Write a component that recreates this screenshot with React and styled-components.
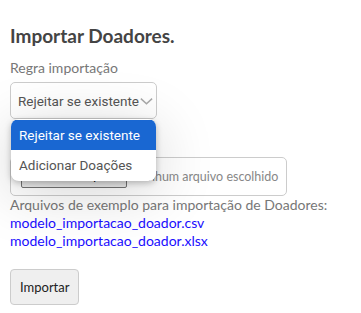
import React from "react";
import styled, { createGlobalStyle } from "styled-components";

const Global = createGlobalStyle`
  html, body { margin: 0; padding: 0; background: #fff; }
  body { font-family: Lato, "Open Sans", sans-serif; }
`;

const Page = styled.div`
  padding: 24px 10px 10px 10px;
  display: flex;
  flex-direction: column;
  align-items: flex-start;
  white-space: nowrap;
`;

const Title = styled.h2`
  margin: 0 0 10px 0;
  font-size: 19px;
  font-weight: 700;
  color: #444;
  line-height: 24px;
`;

const Label = styled.label`
  font-size: 14px;
  color: #777;
  line-height: 20px;
  margin-bottom: 4px;
`;

const SelectWrap = styled.div`
  position: relative;
`;

const SelectBox = styled.div`
  box-sizing: border-box;
  width: 147px;
  height: 37px;
  border: 1px solid #ccc;
  border-radius: 5px;
  display: flex;
  align-items: center;
  justify-content: space-between;
  padding: 0 2px 0 7px;
  font-family: Roboto, "Liberation Sans", sans-serif;
  font-size: 13.5px;
  color: #555;
  overflow: hidden;
`;

const Menu = styled.ul`
  position: absolute;
  left: 1px;
  top: 37px;
  width: 145px;
  margin: 0;
  padding: 1px 0;
  list-style: none;
  background: #fff;
  border-radius: 8px;
  overflow: hidden;
  box-shadow: 0 2px 6px rgba(0, 0, 0, 0.25), 0 10px 60px rgba(0, 0, 0, 0.18);
  z-index: 2;
`;

const Option = styled.li`
  height: 30px;
  display: flex;
  align-items: center;
  padding-left: 8px;
  font-family: Roboto, "Liberation Sans", sans-serif;
  font-size: 13.5px;
  color: ${(p) => (p.$active ? "#fff" : "#555")};
  background: ${(p) => (p.$active ? "#1967d2" : "#fff")};
`;

const FileBox = styled.div`
  box-sizing: border-box;
  margin-top: 38px;
  width: 277px;
  height: 39px;
  border: 1px solid #ccc;
  border-radius: 5px;
  display: flex;
  align-items: center;
  gap: 5px;
  padding: 0 10px;
  font-size: 12.5px;
  color: #888;
  overflow: hidden;
`;

const FileButton = styled.span`
  box-sizing: border-box;
  width: 106px;
  height: 20px;
  margin-top: 2px;
  border: 1px solid #767676;
  border-radius: 2px;
  background: #efefef;
  font-family: Roboto, sans-serif;
  font-size: 12px;
  line-height: 13px;
  color: #000;
  display: flex;
  align-items: flex-start;
  justify-content: center;
  flex-shrink: 0;
`;

const Help = styled.div`
  font-size: 14px;
  color: #777;
  line-height: 18px;
`;

const Link = styled.a`
  font-size: 14px;
  color: #1a0dff;
  line-height: 18px;
  text-decoration: none;
`;

const Button = styled.button`
  margin-top: 19px;
  box-sizing: border-box;
  height: 36px;
  padding: 0 9px;
  border: 1px solid #ccc;
  border-radius: 4px;
  background: #efefef;
  font-family: Lato, sans-serif;
  font-size: 13px;
  color: #222;
`;

const Chevron = () => (
  <svg width="16" height="16" viewBox="0 0 16 16" fill="none">
    <path d="M2 5.5 L8 11 L14 5.5" stroke="#aaa" strokeWidth="1.6" />
  </svg>
);

export default function App() {
  return (
    <>
      <Global />
      <Page>
        <Title>Importar Doadores.</Title>
        <Label>Regra importação</Label>
        <SelectWrap>
          <SelectBox>
            <span>Rejeitar se existente</span>
            <Chevron />
          </SelectBox>
          <Menu>
            <Option $active>Rejeitar se existente</Option>
            <Option>Adicionar Doações</Option>
          </Menu>
        </SelectWrap>
        <FileBox>
          <FileButton>Escolher arquivo</FileButton>
          <span>Nenhum arquivo escolhido</span>
        </FileBox>
        <Help>Arquivos de exemplo para importação de Doadores:</Help>
        <Link href="#">modelo_importacao_doador.csv</Link>
        <Link href="#">modelo_importacao_doador.xlsx</Link>
        <Button>Importar</Button>
      </Page>
    </>
  );
}
